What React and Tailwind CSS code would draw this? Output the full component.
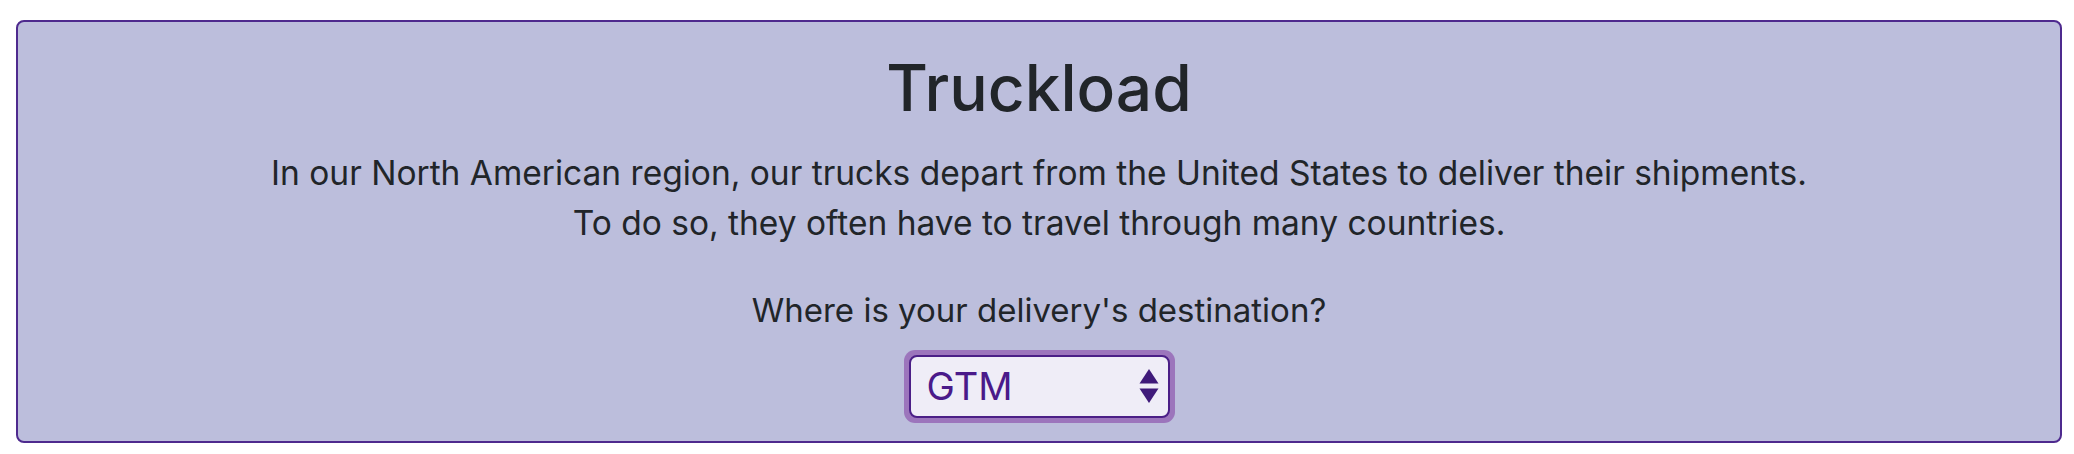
export default function App() {
  return (
    <div className="h-[454px] bg-white pt-5 pl-4 pr-3" style={{ fontFamily: 'Inter, "Noto Sans", sans-serif' }}>
      <div className="h-[423px] rounded-lg border-2 border-[#4e2a8e] bg-[#bcbedc] flex flex-col items-center text-center text-[#212529]">
        <h1 className="mt-[28px] text-[64px] leading-[1.2] font-medium">Truckload</h1>
        <p className="mt-[21px] text-[33.5px] leading-[50px]">
          In our North American region, our trucks depart from the United States to deliver their shipments.
          <br />
          To do so, they often have to travel through many countries.
        </p>
        <p className="mt-[37px] text-[33px] leading-[50px]">Where is your delivery's destination?</p>
        <div className="relative mt-[15px] rounded-[11px] p-[5px] bg-[#9463b4]/80">
          <select
            defaultValue="GTM"
            className="appearance-none w-[261px] h-[63px] rounded-[8px] border-2 border-[#4b1f87] bg-[#efedf7] pl-[16px] text-[38px] text-[#4a1a8a] outline-none"
          >
            <option value="USA">USA</option>
            <option value="MEX">MEX</option>
            <option value="GTM">GTM</option>
            <option value="HND">HND</option>
          </select>
          <svg className="pointer-events-none absolute right-[16px] top-1/2 -translate-y-1/2" width="20" height="36" viewBox="0 0 20 36">
            <polygon points="10,1 19.5,15.5 0.5,15.5" fill="#3f1a7a" />
            <polygon points="0.5,20.5 19.5,20.5 10,35" fill="#3f1a7a" />
          </svg>
        </div>
      </div>
    </div>
  );
}
